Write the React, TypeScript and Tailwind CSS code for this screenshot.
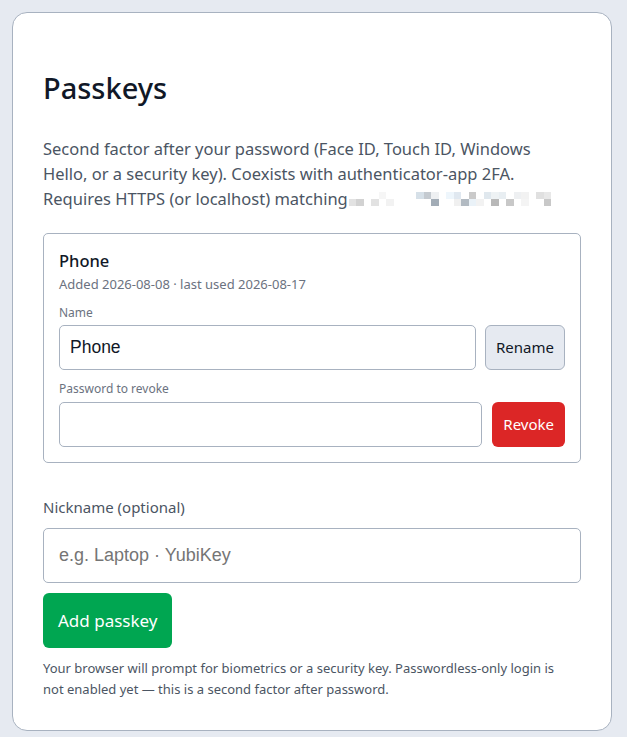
import React from "react";

const top = [
  "", "", "", "", "bg-[#f6f6f6]", "", "", "", "", "bg-[#d6e0e8]", "bg-[#c4cad0]", "bg-[#eef0f2]", "",
  "bg-[#eef6fc]", "bg-[#e0e8f0]", "", "bg-[#cacaca]", "", "bg-[#e0e8ee]", "bg-[#eef2f4]", "bg-[#e8eef2]", "",
  "bg-[#eef0f2]", "bg-[#f2f2f2]", "", "bg-[#e0e0e0]", "bg-[#e8e8e8]",
];
const bottom = [
  "bg-[#e2e2e2]", "bg-[#d2d2d2]", "", "bg-[#e2e2e2]", "", "bg-[#f2f2f2]", "", "", "", "", "", "bg-[#a2acb6]", "",
  "", "bg-[#f0f0f0]", "bg-[#b2bac2]", "bg-[#eaf2f8]", "bg-[#f2f2f2]", "", "bg-[#b8b8b8]", "", "bg-[#c8c8c8]",
  "", "bg-[#f4f4f4]", "", "", "bg-[#c8c8c8]",
];

// pixelated domain after "matching"
const Redacted = () => (
  <span className="inline-flex flex-col align-[6px] ml-px">
    <span className="flex">
      {top.map((c, i) => (
        <span key={i} className={`h-[7px] w-[7.5px] ${c}`}></span>
      ))}
    </span>
    <span className="flex">
      {bottom.map((c, i) => (
        <span key={i} className={`h-[7px] w-[7.5px] ${c}`}></span>
      ))}
    </span>
  </span>
);

const App = () => {
  return (
    <div className="min-h-[737px] bg-[#e6eaf1] pt-3 pl-3 pr-[15px] pb-2 font-['Noto_Sans',sans-serif]">
      <div className="bg-white border border-[#a8b2c0] rounded-[15px] px-[30px] pt-[58px] pb-[30px]">
        <h1 className="text-[29px] leading-[34px] font-medium text-[#111827]">Passkeys</h1>

        <p className="mt-[31px] text-[16.5px] leading-[25px] text-[#4b5563]">
          Second factor after your password (Face ID, Touch ID, Windows
          <br />
          Hello, or a security key). Coexists with authenticator-app 2FA.
          <br />
          Requires HTTPS (or localhost) matching
          <Redacted />
        </p>

        <div className="mt-[22px] border border-[#a8b2c0] rounded-[5px] px-[15px] pt-[16px] pb-[15px]">
          <div className="text-[16.5px] leading-[22px] font-medium text-[#111827]">Phone</div>
          <div className="mt-[3px] text-[13px] leading-[18px] text-[#6b7280]">
            Added 2026-08-08 · last used 2026-08-17
          </div>

          <div className="mt-[12px] text-[12px] leading-[16px] text-[#6b7280]">Name</div>
          <div className="mt-[4px] flex gap-[9px]">
            <input
              defaultValue="Phone"
              className="flex-1 min-w-0 h-[45px] px-[10px] border border-[#a8b2c0] rounded-[5px] text-[17.5px] text-[#111827] font-['Liberation_Sans',sans-serif] outline-none"
            />
            <button className="h-[45px] px-[10px] border border-[#a8b2c0] rounded-[6px] bg-[#e6eaf1] text-[15px] text-[#111827]">
              Rename
            </button>
          </div>

          <div className="mt-[11px] text-[12px] leading-[16px] text-[#6b7280]">Password to revoke</div>
          <div className="mt-[5px] flex gap-[10px]">
            <input
              type="password"
              className="flex-1 min-w-0 h-[45px] px-[10px] border border-[#a8b2c0] rounded-[5px] text-[17px] font-['Liberation_Sans',sans-serif] outline-none"
            />
            <button className="h-[45px] px-[11px] rounded-[6px] bg-[#dc2626] text-[15px] text-white">
              Revoke
            </button>
          </div>
        </div>

        <label className="block mt-[34px] text-[15px] leading-[20px] text-[#4b5563]">Nickname (optional)</label>
        <input
          placeholder="e.g. Laptop · YubiKey"
          className="mt-[11px] w-full h-[55px] px-[15px] border border-[#a8b2c0] rounded-[5px] text-[18px] font-['Liberation_Sans',sans-serif] placeholder:text-[#757575] outline-none"
        />
        <button className="mt-[10px] h-[55px] px-[15px] rounded-[6px] bg-[#00a651] text-[17px] text-white">
          Add passkey
        </button>

        <p className="mt-[10px] text-[13px] leading-[21px] text-[#4b5563]">
          Your browser will prompt for biometrics or a security key. Passwordless-only login is
          <br />
          not enabled yet — this is a second factor after password.
        </p>
      </div>
    </div>
  );
};

export default App;
